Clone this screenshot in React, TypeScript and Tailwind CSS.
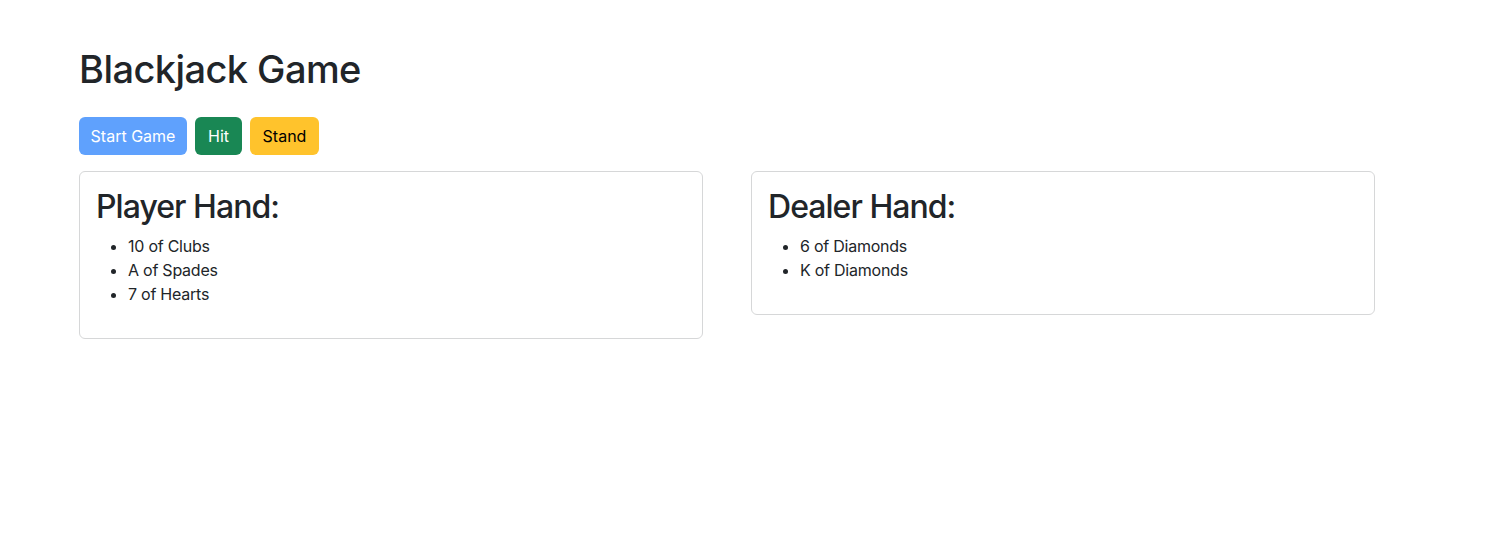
export default function App() {
  const player = ["10 of Clubs", "A of Spades", "7 of Hearts"];
  const dealer = ["6 of Diamonds", "K of Diamonds"];

  return (
    <div
      className="min-h-[533px] bg-white pl-[79px] pt-[45px] text-[#212529]"
      style={{ fontFamily: "Inter, 'Noto Sans', sans-serif" }}
    >
      <h1 className="mb-6 text-[38px] font-medium leading-[48px] tracking-[-0.015em]">
        Blackjack Game
      </h1>

      <div className="mb-4 flex gap-2">
        <button className="h-[38px] w-[108px] rounded-md bg-[#5fa1fd] text-base leading-6 text-white">
          Start Game
        </button>
        <button className="h-[38px] w-[47px] rounded-md bg-[#198754] text-base leading-6 text-white">
          Hit
        </button>
        <button className="h-[38px] w-[69px] rounded-md bg-[#ffc32c] text-base leading-6 text-black">
          Stand
        </button>
      </div>

      <div className="flex items-start gap-12">
        <Hand title="Player Hand:" cards={player} />
        <Hand title="Dealer Hand:" cards={dealer} />
      </div>
    </div>
  );
}

function Hand({ title, cards }: { title: string; cards: string[] }) {
  return (
    <div className="w-[624px] rounded-md border border-[#d6d7d8] p-4">
      <h2 className="mb-2 text-[32px] font-medium leading-[38px] tracking-[-0.03em]">
        {title}
      </h2>
      <ul className="mb-4 list-disc pl-8 text-base leading-6 tracking-[-0.015em]">
        {cards.map((c) => (
          <li key={c}>{c}</li>
        ))}
      </ul>
    </div>
  );
}
